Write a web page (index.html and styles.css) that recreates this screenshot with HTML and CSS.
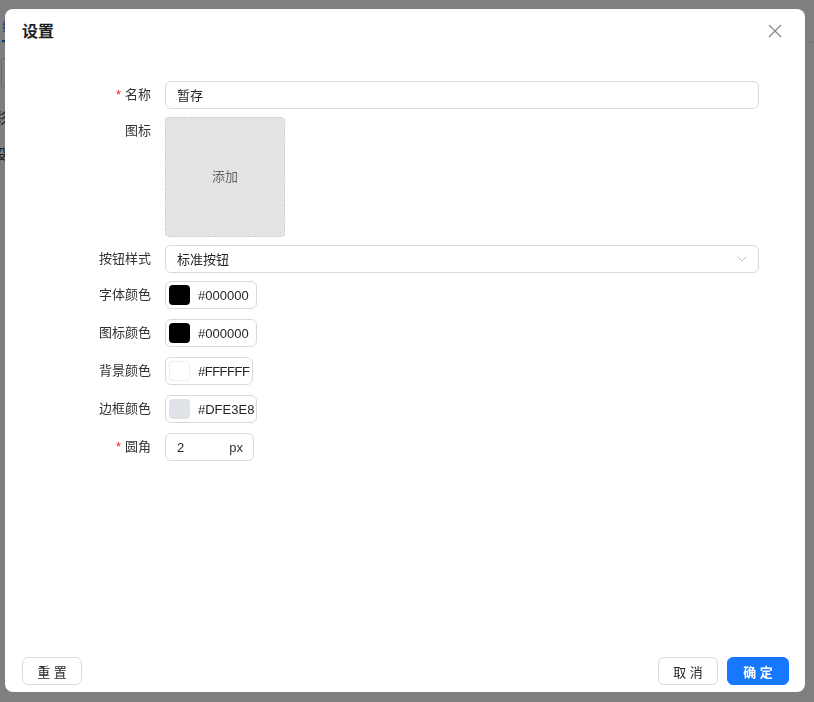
FILE: index.html
```html
<!DOCTYPE html>
<html lang="zh-CN">
<head>
<meta charset="utf-8">
<title>设置</title>
<link rel="stylesheet" href="styles.css">
</head>
<body>
<div class="page">
  <div class="page-top">
    <span class="page-tab">编</span>
  </div>
  <div class="page-field"></div>
  <div class="page-line first">彩</div>
  <div class="page-line">设</div>
</div>
<div class="mask"></div>
<div class="dialog">
  <div class="dialog-header">
    <span class="dialog-title">设置</span>
    <svg class="close" width="14" height="14" viewBox="0 0 14 14"><path d="M1 1L13 13M13 1L1 13" stroke="#8a8a8a" stroke-width="1.3" fill="none"/></svg>
  </div>
  <div class="dialog-body">
    <div class="row">
      <div class="label"><span class="req">*</span>名称</div>
      <div class="input">暂存</div>
    </div>
    <div class="row">
      <div class="label">图标</div>
      <div><div class="upload">添加</div></div>
    </div>
    <div class="row">
      <div class="label">按钮样式</div>
      <div class="input select">
        <span>标准按钮</span>
        <svg width="10" height="6" viewBox="0 0 10 6"><path d="M0.5 0.5L5 5L9.5 0.5" stroke="#c4c4c4" stroke-width="1" fill="none"/></svg>
      </div>
    </div>
    <div class="row tall">
      <div class="label">字体颜色</div>
      <div><div class="color"><span class="swatch black"></span><span>#000000</span></div></div>
    </div>
    <div class="row tall">
      <div class="label">图标颜色</div>
      <div><div class="color"><span class="swatch black"></span><span>#000000</span></div></div>
    </div>
    <div class="row tall">
      <div class="label">背景颜色</div>
      <div><div class="color narrow"><span class="swatch white"></span><span>#FFFFFF</span></div></div>
    </div>
    <div class="row tall">
      <div class="label">边框颜色</div>
      <div><div class="color"><span class="swatch grey"></span><span>#DFE3E8</span></div></div>
    </div>
    <div class="row tall">
      <div class="label"><span class="req">*</span>圆角</div>
      <div><div class="number"><span>2</span><span class="unit">px</span></div></div>
    </div>
  </div>
  <div class="dialog-footer">
    <button class="btn">重 置</button>
    <div class="btn-group">
      <button class="btn">取 消</button>
      <button class="btn primary">确 定</button>
    </div>
  </div>
</div>
</body>
</html>
```
FILE: styles.css
```css
* { box-sizing: border-box; }
html, body { margin: 0; height: 100%; }
body {
  font-family: "Liberation Sans", "Noto Sans CJK SC", sans-serif;
  font-size: 13px;
  color: #262626;
  background: #fff;
  overflow: hidden;
}

/* underlying page */
.page { padding-left: 1px; }
.page-top {
  height: 43px;
  border-bottom: 1px solid #e6e6e6;
  padding-top: 15px;
  padding-left: 1px;
}
.page-tab {
  display: inline-block;
  color: #1677ff;
  font-size: 14px;
  line-height: 22px;
  padding-bottom: 3px;
  border-bottom: 2px solid #1677ff;
}
.page-field {
  margin-top: 15px;
  width: 240px;
  height: 29px;
  border: 1px solid #d0d0d0;
  border-radius: 2px;
}
.page-line {
  font-size: 14px;
  color: #333;
  margin-left: -8px;
  line-height: 20px;
}
.page-line.first { margin-top: 21px; }
.page-line + .page-line { margin-top: 16px; }

.mask {
  position: fixed;
  inset: 0;
  background: rgba(0, 0, 0, 0.5);
}

/* dialog */
.dialog {
  position: fixed;
  left: 5px;
  top: 9px;
  width: 800px;
  height: 683px;
  background: #fff;
  border-radius: 8px;
  display: flex;
  flex-direction: column;
}
.dialog-header {
  height: 42px;
  display: flex;
  align-items: center;
  justify-content: space-between;
  padding: 0 23px 0 17px;
}
.dialog-title {
  font-size: 16px;
  font-weight: 700;
  color: #1f1f1f;
}
.close { display: block; margin-top: 2px; }

.dialog-body {
  flex: 1;
  padding: 30px 46px 0;
}
.row {
  display: grid;
  grid-template-columns: 100px 1fr;
  column-gap: 14px;
  margin-bottom: 8px;
  align-items: start;
}
.row.tall { height: 30px; }
.label {
  text-align: right;
  line-height: 27px;
  color: #333;
}
.req {
  color: #f5222d;
  margin-right: 4px;
}
.input {
  height: 28px;
  border: 1px solid #d9d9d9;
  border-radius: 6px;
  padding: 0 11px 2px;
  display: flex;
  align-items: center;
  color: #262626;
}
.select { justify-content: space-between; }
.select svg { display: block; margin-top: 2px; }

.upload {
  width: 120px;
  height: 120px;
  background: #e4e4e4;
  border: 1px dashed #d0d0d0;
  border-radius: 4px;
  display: flex;
  align-items: center;
  justify-content: center;
  padding-bottom: 3px;
  color: #666;
}

.color {
  display: flex;
  align-items: center;
  gap: 8px;
  width: 92px;
  height: 28px;
  border: 1px solid #d9d9d9;
  border-radius: 6px;
  padding: 0 3px;
  white-space: nowrap;
  color: #262626;
}
.color.narrow { width: 88px; letter-spacing: -0.5px; }
.swatch {
  flex: none;
  width: 21px;
  height: 20px;
  border-radius: 4px;
}
.swatch.black { background: #000; }
.swatch.white { background: #fff; border: 1px solid #eeeeee; }
.swatch.grey { background: #dfe3e8; }

.number {
  display: flex;
  align-items: center;
  justify-content: space-between;
  width: 89px;
  height: 28px;
  border: 1px solid #d9d9d9;
  border-radius: 6px;
  padding: 0 10px 0 11px;
}
.unit { color: #333; }

.dialog-footer {
  display: flex;
  justify-content: space-between;
  align-items: center;
  padding: 0 16px 7px 17px;
}
.btn-group { display: flex; gap: 9px; }
.btn {
  font-family: inherit;
  font-size: 13px;
  width: 60px;
  height: 28px;
  border: 1px solid #d9d9d9;
  border-radius: 6px;
  background: #fff;
  color: #262626;
  padding: 0;
}
.btn.primary {
  width: 62px;
  background: #1677ff;
  border-color: #1677ff;
  color: #fff;
  font-weight: 700;
}
```
